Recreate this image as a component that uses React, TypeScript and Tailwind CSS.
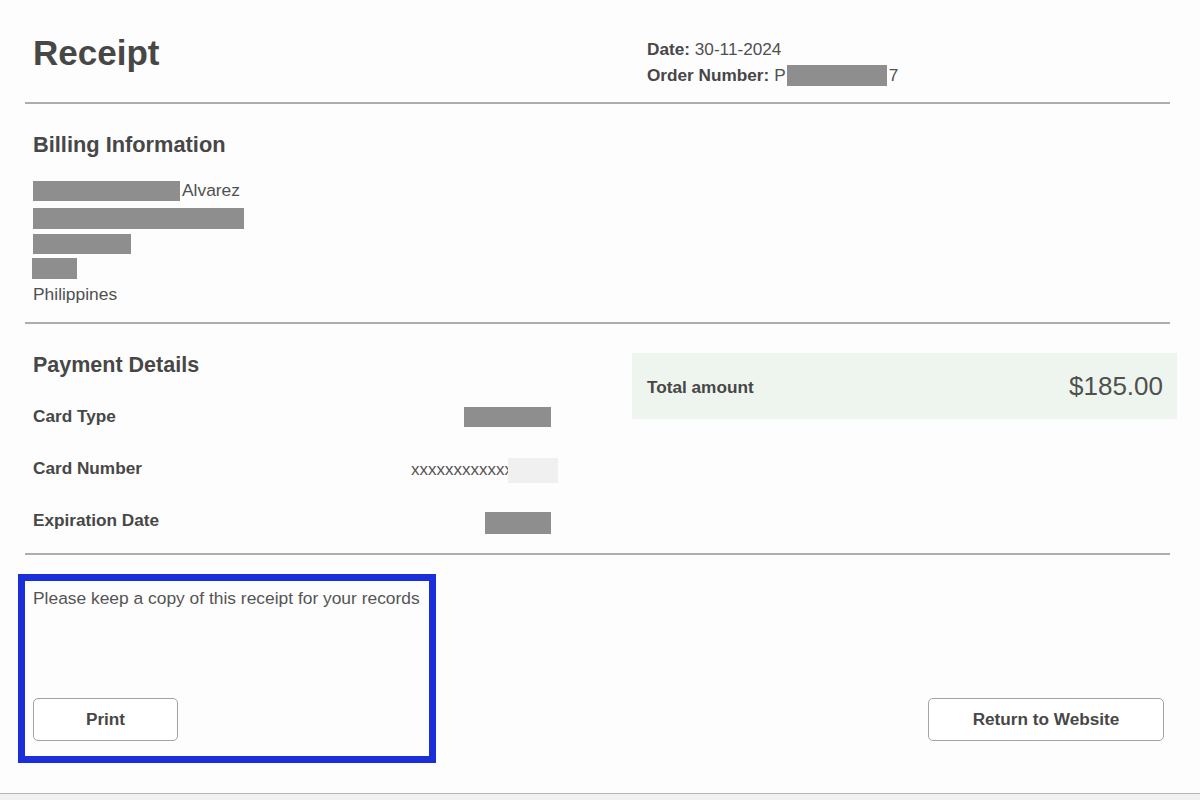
import React from "react";

function Redact({ w, h, className = "" }: { w: string; h: string; className?: string }) {
  return <span className={`inline-block bg-[#8e8e8e] ${w} ${h} ${className}`} />;
}

export default function App() {
  return (
    <div className="w-[1200px] h-[800px] bg-[#fdfdfd] flex flex-col font-['Liberation_Sans',Arial,sans-serif] text-[#505050] overflow-hidden">
      <div className="h-[793px] pl-[25px] pr-[30px] flex flex-col">
        {/* Header */}
        <div className="h-[102px] flex">
          <div className="w-[607px] pl-[8px] pt-[33px]">
            <h1 className="text-[35px] leading-[40px] font-bold text-[#474747]">Receipt</h1>
          </div>
          <div className="pt-[36px] pl-[15px] text-[17.2px] leading-[26px]">
            <div>
              <span className="font-bold text-[#474747]">Date:</span> 30-11-2024
            </div>
            <div className="flex items-center">
              <span className="font-bold text-[#474747]">Order Number:</span>
              <span className="ml-[5px]">P</span>
              <Redact w="w-[100px]" h="h-[21px]" className="ml-[1px]" />
              <span className="ml-[2px]">7</span>
            </div>
          </div>
        </div>
        <div className="h-[2px] bg-[#adadad]" />

        {/* Billing */}
        <div className="pt-[26px] pl-[8px] pb-[15px]">
          <h2 className="text-[21.8px] leading-[28px] font-bold text-[#474747] mt-[1px]">Billing Information</h2>
          <div className="mt-[19px] flex flex-col text-[17.4px]">
            <div className="h-[25px] flex items-center">
              <Redact w="w-[147px]" h="h-[20px]" />
              <span className="ml-[2px] leading-[25px]">Alvarez</span>
            </div>
            <div className="h-[25px] mt-[3px] flex items-center">
              <Redact w="w-[211px]" h="h-[21px]" />
            </div>
            <div className="h-[25px] flex items-center">
              <Redact w="w-[98px]" h="h-[20px]" />
            </div>
            <div className="h-[25px] flex items-center">
              <Redact w="w-[45px]" h="h-[21px]" className="-ml-[1px]" />
            </div>
            <div className="h-[25px] mt-[1px] leading-[25px]">Philippines</div>
          </div>
        </div>
        <div className="h-[2px] bg-[#adadad]" />

        {/* Payment */}
        <div className="flex pb-[6px]">
          <div className="w-[607px] pl-[8px] pt-[27px]">
            <h2 className="text-[21.5px] leading-[28px] font-bold text-[#474747]">Payment Details</h2>
            <div className="mt-[12px] w-[518px] text-[17.2px] font-bold text-[#474747]">
              <div className="h-[52px] flex items-center justify-between">
                <span>Card Type</span>
                <Redact w="w-[87px]" h="h-[20px]" />
              </div>
              <div className="h-[52px] flex items-center justify-between">
                <span>Card Number</span>
                <span className="flex items-center -mr-[7px] mt-[2px]">
                  <span className="text-[17px] font-normal text-[#555]">xxxxxxxxxxxx</span>
                  <span className="inline-block w-[50px] h-[25px] bg-[#f0f0f0] -ml-[5px]" />
                </span>
              </div>
              <div className="h-[52px] flex items-center justify-between">
                <span>Expiration Date</span>
                <Redact w="w-[66px]" h="h-[22px]" className="mt-[3px]" />
              </div>
            </div>
          </div>
          <div className="flex-1 -mr-[7px] pt-[29px]">
            <div className="h-[66px] bg-[#eef5ee] flex items-center justify-between pl-[15px] pr-[14px]">
              <span className="text-[17.2px] font-bold text-[#474747] mt-[4px]">Total amount</span>
              <span className="text-[26px] text-[#505050]">$185.00</span>
            </div>
          </div>
        </div>
        <div className="h-[2px] bg-[#adadad]" />

        {/* Bottom */}
        <div className="flex-1 flex items-end justify-between pt-[18px] pb-[30px]">
          <div className="-ml-[7px] w-[418px] h-[189px] border-[7px] border-[#1a2fd9] flex flex-col justify-between pl-[8px] pt-[5px] pb-[15px]">
            <p className="text-[17.4px] leading-[24px] text-[#555]">Please keep a copy of this receipt for your records</p>
            <button className="w-[145px] h-[43px] border-[1.5px] border-[#a3a3a3] rounded-[5px] bg-white text-[17.2px] font-bold text-[#474747]">
              Print
            </button>
          </div>
          <button className="mb-[22px] mr-[6px] w-[236px] h-[43px] border-[1.5px] border-[#a3a3a3] rounded-[5px] bg-white text-[17.2px] font-bold text-[#474747]">
            Return to Website
          </button>
        </div>
      </div>
      <div className="flex-1 border-t-[1.5px] border-[#b5b5b5] bg-[#f1f1f1]" />
    </div>
  );
}
